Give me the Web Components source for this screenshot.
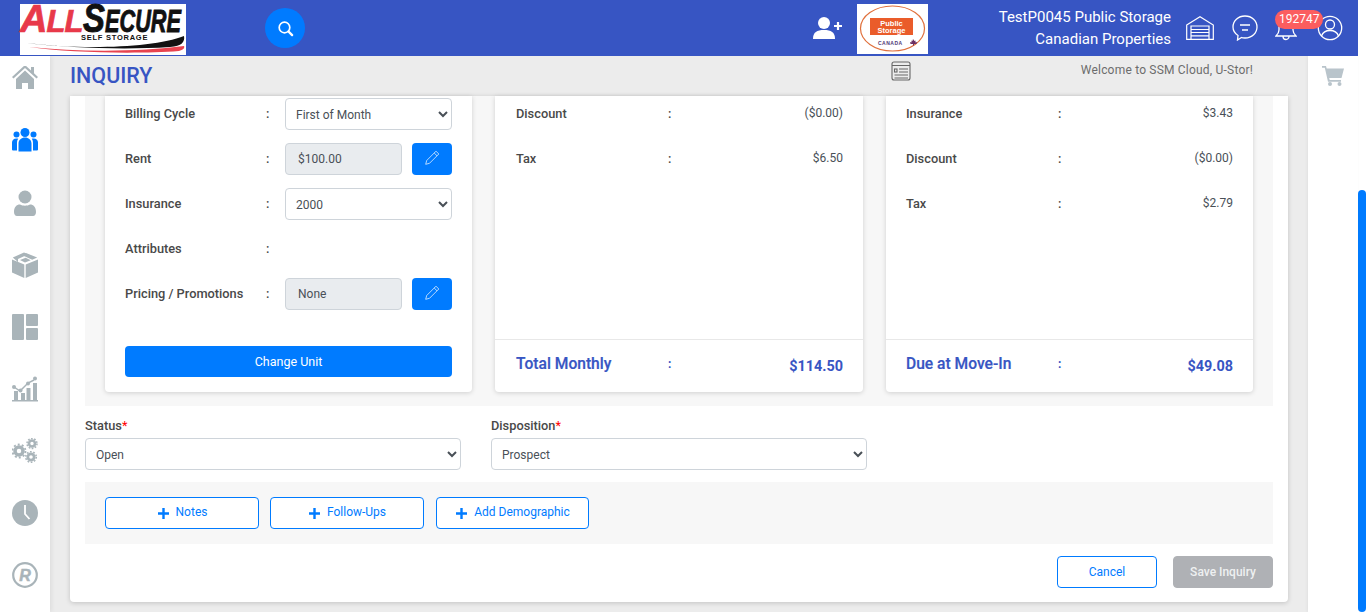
<!DOCTYPE html>
<html lang="en">
<head>
<meta charset="utf-8">
<title>Inquiry</title>
<style>
  html, body { margin: 0; height: 100%; overflow: hidden; background: #ececec; }
  body { font-family: Roboto, "Liberation Sans", sans-serif; font-size: 12px; color: #495057; }
</style>
</head>
<body>

<app-shell>
  <top-bar slot="top"></top-bar>
  <side-nav slot="left"></side-nav>
  <inquiry-page slot="main"></inquiry-page>
  <cart-rail slot="right"></cart-rail>
</app-shell>

<script>
const ICONS = {
  search: '<circle cx="7.5" cy="7.5" r="5.3" fill="none" stroke="#fff" stroke-width="1.7"/><path d="M11.5 11.5l3.6 3.6" stroke="#fff" stroke-width="2.4" stroke-linecap="round"/>',
  pencil: '<path d="M12 1.2l2.800 2.800-9.300 9.300-3.800 1 1-3.800zM10.200 3l2.800 2.800" fill="none" stroke="#fff" stroke-width=".7"/>',
  plus: '<path d="M6.5 1v11M1 6.5h11" stroke="#007bff" stroke-width="2.4"/>'
};

class AppShell extends HTMLElement {
  constructor() {
    super();
    this.attachShadow({ mode: "open" }).innerHTML = `
    <style>
      :host { display: grid; grid-template-columns: 50px 1fr 50px 8px; grid-template-rows: 56px 556px; width: 1366px; height: 612px; overflow: hidden; }
      .top { grid-column: 1 / 4; }
      .bar { grid-column: 4; grid-row: 1 / 3; background: #fff; display: flex; flex-direction: column; }
      .thumb { margin-top: 190px; flex: 1; background: #007bff; border-radius: 4px; }
      ::slotted(side-nav), ::slotted(inquiry-page), ::slotted(cart-rail) { min-height: 0; }
    </style>
    <div class="top"><slot name="top"></slot></div>
    <slot name="left"></slot>
    <slot name="main"></slot>
    <slot name="right"></slot>
    <div class="bar"><div class="thumb"></div></div>`;
  }
}

class TopBar extends HTMLElement {
  constructor() {
    super();
    this.attachShadow({ mode: "open" }).innerHTML = `
    <style>
      :host { display: flex; align-items: center; height: 56px; background: #3755c3; color: #fff; position: relative; z-index: 2; }
      .logo { margin-left: 20px; width: 166px; height: 51px; margin-top: 2px; background: #fff; flex: none; }
      .logo svg, .ps svg { display: block; overflow: visible; }
      .search { width: 40px; height: 40px; border-radius: 50%; background: #007bff; margin-left: 79px; display: flex; align-items: center; justify-content: center; flex: none; }
      .grow { flex: 1; }
      .ps { width: 71px; height: 50px; background: #fff; margin: 2px 0 0 13px; flex: none; }
      .names { width: 243px; text-align: right; font-size: 15px; line-height: 22.5px; flex: none; }
      .icons { display: flex; align-items: center; margin-left: 15px; position: relative; width: 172px; flex: none; }
      .icons svg { display: block; flex: none; }
      .badge { position: absolute; left: 89px; top: -5px; background: #fb5d5f; color: #fff; border-radius: 10px; font-size: 12px; line-height: 19px; height: 19px; padding: 0 4px; }
    </style>
    <div class="logo">
      <svg width="166" height="51" viewBox="0 0 166 51">
        <text transform="translate(0 28)" font-family="Liberation Sans" font-weight="700" font-style="italic" font-size="38" fill="#e8394a" stroke="#e8394a" stroke-width=".7" letter-spacing="-1">A<tspan font-size="31">LL</tspan></text>
        <text transform="translate(63 28) scale(.82 1)" font-family="Liberation Sans" font-weight="700" font-style="italic" font-size="40" fill="#111" stroke="#111" stroke-width=".9">S</text>
        <text transform="translate(85 28) scale(.7 1)" font-family="Liberation Sans" font-weight="700" font-style="italic" font-size="31" fill="#111" stroke="#111" stroke-width=".9">ECURE</text>
        <text x="61" y="36" font-family="Liberation Sans" font-weight="700" font-size="7.500" letter-spacing=".75" fill="#111">SELF STORAGE</text>
        <path d="M7 39C60 46 135 44 164 32c1 6-2 10-14 11C105 46 50 44 7 39z" fill="#111"/>
        <path d="M9 43c50 5 110 5 155-1 1 2-1 4-5 5-40 3-110 2-150-4z" fill="#e8434f"/>
      </svg>
    </div>
    <div class="search"><svg width="17" height="17" viewBox="0 0 17 17">${ICONS.search}</svg></div>
    <div class="grow"></div>
    <svg width="32" height="24" viewBox="0 0 32 24" style="flex:none">
      <circle cx="12" cy="7" r="6" fill="#fff"/><path d="M1 23c0-7 4-9 11-9s11 2 11 9z" fill="#fff"/><path d="M26 6v8M22 10h8" stroke="#fff" stroke-width="2.200"/>
    </svg>
    <div class="ps">
      <svg width="71" height="50" viewBox="0 0 71 50">
        <ellipse cx="35.500" cy="24.500" ry="22.500" rx="32" fill="none" stroke="#e0703c" stroke-width="1.200"/>
        <rect x="13" y="14" width="43" height="17" fill="#ea5c2a"/>
        <text x="34.500" y="21.500" text-anchor="middle" font-family="Liberation Sans" font-weight="700" font-size="7.500" fill="#fff">Public</text>
        <text x="34.500" y="29" text-anchor="middle" font-family="Liberation Sans" font-weight="700" font-size="7.500" fill="#fff">Storage</text>
        <text x="21" y="41" font-family="Liberation Sans" font-weight="700" font-size="5" letter-spacing=".5" fill="#4f3a78">CANADA</text>
        <path d="M56 35l1.500 2 1-.5 0 2 1.500-.5-.5 2h-2.500v1.500h-1v-1.500h-2.500l-.5-2 1.500.5 0-2 1 .5z" fill="#6b2f63"/>
      </svg>
    </div>
    <div class="names"><div>TestP0045 Public Storage</div><div>Canadian Properties</div></div>
    <div class="icons">
      <svg width="28" height="24" viewBox="0 0 28 24" fill="none" stroke="#fff" stroke-width="1.200">
        <path d="M.7 9L14 .8 27.300 9v14.300H.7zM5 10h18v13.300H5zM5 13.500h18M5 16.500h18M5 19.800h18"/>
      </svg>
      <svg style="margin-left:18px" width="26" height="26" viewBox="0 0 26 26" fill="none" stroke="#fff" stroke-width="1.300">
        <path d="M13 1c7 0 12 5 12 11s-5 11-12 11c-1.500 0-2.500 0-3.500-.5L5.500 25l.5-4.500C3 18.500 1 15.500 1 12 1 6 6 1 13 1z"/><path d="M8 10h10M10 15h6"/>
      </svg>
      <svg style="margin-left:17px" width="22" height="26" viewBox="0 0 22 26" fill="none" stroke="#fff" stroke-width="1.300">
        <path d="M4 6v9c0 3-1 4-3 6h20c-2-2-3-3-3-6V6M8 21.500a3 3 0 0 0 6 0"/>
      </svg>
      <svg style="margin-left:20px" width="26" height="26" viewBox="0 0 26 26" fill="none" stroke="#fff" stroke-width="1.300">
        <circle cx="13" cy="13" r="11.700"/><circle cx="13" cy="9.500" r="4.500"/><path d="M4.500 21c1.500-4 4-5.500 8.500-5.500s7 1.500 8.500 5.500"/>
      </svg>
      <span class="badge">192747</span>
    </div>`;
  }
}

class SideNav extends HTMLElement {
  constructor() {
    super();
    const g = "#a9b4b9";
    this.attachShadow({ mode: "open" }).innerHTML = `
    <style>
      :host { display: flex; flex-direction: column; align-items: center; background: #fff; padding-top: 10px; box-shadow: 2px 0 4px rgba(0,0,0,.06); position: relative; z-index: 1; }
      svg { display: block; width: 26px; height: 26px; margin-bottom: 36px; flex: none; }
    </style>
    <svg viewBox="0 2 26 26" fill="${g}"><path d="M13 1L0 13l1.500 1.500L13 4l11.500 10.500L26 13l-4-3.700V3h-3v3.500zM4 15v10h6v-6h6v6h6V15L13 6.500z"/></svg>
    <svg viewBox="0 2.500 26 26" fill="#007bff"><circle cx="13" cy="7" r="4.500"/><circle cx="4.500" cy="9" r="3"/><circle cx="21.500" cy="9" r="3"/><path d="M6.500 26v-8c0-3.500 3-6 6.500-6s6.500 2.500 6.500 6v8zM0 24v-7c0-2 1.500-4 4.500-4 .7 0 1.300.1 1.700.3C5.300 14.500 5 16 5 18v7H1a1 1 0 0 1-1-1zM26 24v-7c0-2-1.500-4-4.500-4-.7 0-1.300.1-1.700.3.900 1.200 1.200 2.700 1.200 4.700v7h4a1 1 0 0 0 1-1z"/></svg>
    <svg viewBox="0 0 26 26" fill="${g}"><circle cx="13" cy="7" r="6.500"/><path d="M2 22c0-5 2.500-7.500 6-7.500 1.500.8 3 1.200 5 1.200s3.500-.4 5-1.200c3.500 0 6 2.500 6 7.500 0 2-1 4-3 4H5c-2 0-3-2-3-4z"/></svg>
    <svg viewBox="0 0 26 26" fill="${g}"><path d="M0 7.500l12.300 5V26L0 20.500zM26 7.500l-12.300 5V26L26 20.500zM.8 5.500L12 .5l4.300 1.800L6 7v3zM14 1l11.200 4.500-5 2.300L9.800 3zM8 8l5 2.400 5.700-2.200-5-2.400z"/></svg>
    <svg viewBox="0 0 26 26" fill="${g}"><rect width="12" height="26" rx="1"/><rect x="14" width="12" height="12" rx="1"/><rect x="14" y="14" width="12" height="12" rx="1"/></svg>
    <svg viewBox="0 0 26 26" fill="${g}"><rect x="2" y="15" width="4" height="9"/><rect x="9" y="17" width="4" height="7"/><rect x="14.500" y="12" width="4" height="12"/><rect x="21" y="7" width="4" height="17"/><rect y="24" width="26" height="1.500"/><path d="M2 11l6 4 8-8 6-3" fill="none" stroke="${g}" stroke-width="1.500"/><circle cx="2" cy="11" r="2"/><circle cx="8.500" cy="14.500" r="2"/><circle cx="16" cy="7.500" r="2"/><circle cx="23" cy="2.500" r="2"/></svg>
    <svg viewBox="0 0 26 26" fill="none" stroke="${g}">
      <circle cx="7" cy="13" r="4" stroke-width="3.500"/><circle cx="7" cy="13" r="6.500" stroke-width="1.800" stroke-dasharray="2 2.080"/>
      <circle cx="20" cy="5.500" r="3" stroke-width="2.600"/><circle cx="20" cy="5.500" r="5" stroke-width="1.500" stroke-dasharray="1.700 1.440"/>
      <circle cx="19" cy="19" r="3.200" stroke-width="2.800"/><circle cx="19" cy="19" r="5.300" stroke-width="1.500" stroke-dasharray="1.700 1.630"/>
    </svg>
    <svg viewBox="0 0 26 26"><circle cx="13" cy="13" r="13" fill="${g}"/><path d="M13 5v9l4.500 5" fill="none" stroke="#fff" stroke-width="1.800"/></svg>
    <svg viewBox="0 0 26 26"><circle cx="13" cy="13" r="11.800" fill="none" stroke="${g}" stroke-width="2.200"/><text x="13" y="18.500" text-anchor="middle" font-family="Liberation Sans" font-weight="700" font-style="italic" font-size="16" fill="${g}" stroke="${g}" stroke-width=".5">R</text></svg>`;
  }
}

class CartRail extends HTMLElement {
  constructor() {
    super();
    this.attachShadow({ mode: "open" }).innerHTML = `
    <style>
      :host { display: block; background: #fff; padding: 9px 0 0 14px; box-shadow: -1px 0 3px rgba(0,0,0,.05); position: relative; z-index: 1; }
      svg { display: block; }
    </style>
    <svg width="22" height="21" viewBox="0 0 22 21" fill="#b9c4cb"><path d="M0 1h4l.7 2.500H22l-2.500 9.500H7.200l.5 2H19v1.800H6L2.800 2.800H0z"/><circle cx="8" cy="19" r="2"/><circle cx="17.500" cy="19" r="2"/></svg>`;
  }
}

class InquiryPage extends HTMLElement {
  constructor() {
    super();
    this.attachShadow({ mode: "open" }).innerHTML = `
    <style>
      :host { display: block; background: #ececec; overflow: hidden; }
      .head { height: 40px; display: flex; position: relative; padding-left: 20px; }
      h1 { margin: 8px 0 0; font-size: 21.5px; line-height: 24px; font-weight: 500; color: #3755c3; }
      .news { position: absolute; left: 841px; top: 5px; display: block; }
      .welcome { position: absolute; right: 55px; top: 6px; font-size: 12px; line-height: 16px; letter-spacing: .2px; color: #6c6c6c; }
      .sheet { margin: 0 20px; height: 506px; background: #fff; border-radius: 0 0 4px 4px; box-shadow: 0 1px 5px rgba(0,0,0,.18); padding: 0 15px; box-sizing: border-box; }
      .panel { background: #f7f7f7; height: 310px; padding: 0 20px 14px; box-sizing: border-box; display: grid; grid-template-columns: 367px 368px 367px; column-gap: 23px; }
      .statuses { display: flex; gap: 30px; margin-top: 11px; }
      .statuses form-field { width: 376px; }
      .actions { background: #f7f7f7; margin-top: 12px; height: 62px; padding: 15px 20px; box-sizing: border-box; display: flex; gap: 11px; }
      .actions line-button:last-child { margin-left: 1px; }
      .foot { display: flex; justify-content: flex-end; gap: 16px; margin-top: 12px; }
      .third { --pad: 20px; }
    </style>
    <div class="head">
      <h1>INQUIRY</h1>
      <svg class="news" width="20" height="20" viewBox="0 0 20 20" fill="none" stroke="#666" stroke-width="1.100"><rect x="1" y="1" width="18" height="18" rx="2"/><path d="M1 4.500h18M8 8h9M8 11h9M3.500 14h13.500M3.500 17h13.500"/><rect x="3.500" y="8" width="2.500" height="3"/></svg>
      <span class="welcome">Welcome to SSM Cloud, U-Stor!</span>
    </div>
    <div class="sheet">
      <div class="panel">
        <unit-card>
          <form-row label="Billing Cycle"><pick-box value="First of Month"></pick-box></form-row>
          <form-row label="Rent"><edit-box value="$100.00"></edit-box></form-row>
          <form-row label="Insurance"><pick-box value="2000"></pick-box></form-row>
          <form-row label="Attributes"></form-row>
          <form-row label="Pricing / Promotions"><edit-box value="None"></edit-box></form-row>
        </unit-card>
        <total-card total-label="Total Monthly" total="$114.50">
          <charge-row label="Discount" value="($0.00)"></charge-row>
          <charge-row label="Tax" value="$6.50"></charge-row>
        </total-card>
        <total-card class="third" total-label="Due at Move-In" total="$49.08">
          <charge-row label="Insurance" value="$3.43"></charge-row>
          <charge-row label="Discount" value="($0.00)"></charge-row>
          <charge-row label="Tax" value="$2.79"></charge-row>
        </total-card>
      </div>
      <div class="statuses">
        <form-field label="Status"><pick-box value="Open"></pick-box></form-field>
        <form-field label="Disposition"><pick-box value="Prospect"></pick-box></form-field>
      </div>
      <div class="actions">
        <line-button width="154" plus>Notes</line-button>
        <line-button width="154" plus>Follow-Ups</line-button>
        <line-button width="153" plus>Add Demographic</line-button>
      </div>
      <div class="foot">
        <line-button width="100">Cancel</line-button>
        <line-button width="100" disabled>Save Inquiry</line-button>
      </div>
    </div>`;
  }
}

class UnitCard extends HTMLElement {
  constructor() {
    super();
    this.attachShadow({ mode: "open" }).innerHTML = `
    <style>
      :host { display: block; background: #fff; border-radius: 0 0 4px 4px; box-shadow: 0 1px 5px rgba(0,0,0,.16); padding: 2px 20px 0; height: 296px; box-sizing: border-box; }
      .rows { display: flex; flex-direction: column; gap: 13px; height: 248px; }
      button { display: block; width: 100%; height: 31px; border: 0; border-radius: 4px; background: #007bff; color: #fff; font: 400 12.500px Roboto, sans-serif; padding: 0; }
    </style>
    <div class="rows"><slot></slot></div>
    <button type="button">Change Unit</button>`;
  }
}

class FormRow extends HTMLElement {
  constructor() {
    super();
    this.attachShadow({ mode: "open" }).innerHTML = `
    <style>
      :host { display: grid; grid-template-columns: 141px 19px 167px; height: 32px; align-items: center; font-weight: 500; color: #494949; font-size: 12.800px; }
      span { position: relative; top: -1px; }
    </style>
    <span>${this.getAttribute("label")}</span><span>:</span><slot></slot>`;
  }
}

class PickBox extends HTMLElement {
  constructor() {
    super();
    this.attachShadow({ mode: "open" }).innerHTML = `
    <style>
      :host { display: block; height: 32px; }
      select { display: block; width: 100%; height: 32px; border: 1px solid #ced4da; border-radius: 4px; background: #fff; color: #495057; font: 400 12px Roboto, sans-serif; padding: 2px 0 0 6px; }
    </style>
    <select><option>${this.getAttribute("value")}</option></select>`;
  }
}

class EditBox extends HTMLElement {
  constructor() {
    super();
    this.attachShadow({ mode: "open" }).innerHTML = `
    <style>
      :host { display: flex; justify-content: space-between; height: 32px; font-size: 12px; }
      .val { width: 117px; box-sizing: border-box; background: #e9ecef; border: 1px solid #ced4da; border-radius: 4px; font-weight: 400; color: #495057; padding-left: 12px; line-height: 30px; }
      .btn { width: 40px; background: #007bff; border-radius: 4px; display: flex; align-items: center; justify-content: center; }
      svg { position: relative; top: -1px; }
    </style>
    <div class="val">${this.getAttribute("value")}</div>
    <div class="btn"><svg width="16" height="16" viewBox="0 0 16 16">${ICONS.pencil}</svg></div>`;
  }
}

class TotalCard extends HTMLElement {
  constructor() {
    super();
    this.attachShadow({ mode: "open" }).innerHTML = `
    <style>
      :host { display: flex; flex-direction: column; background: #fff; border-radius: 0 0 4px 4px; box-shadow: 0 1px 5px rgba(0,0,0,.16); height: 296px; }
      .rows { flex: 1; padding: 2px 20px 0 var(--pad, 21px); display: flex; flex-direction: column; gap: 13px; }
      .total { height: 53px; flex: none; border-top: 1px solid #e8e8e8; display: grid; grid-template-columns: 152px 1fr auto; align-items: center; padding: 0 20px 0 var(--pad, 21px); color: #3755c3; font-weight: 700; box-sizing: border-box; }
      .l { font-size: 15.600px; font-weight: 500; position: relative; top: -2px; -webkit-text-stroke: .2px #3755c3; }
      .c { font-size: 12px; position: relative; top: -2px; }
      .v { font-size: 14.400px; }
    </style>
    <div class="rows"><slot></slot></div>
    <div class="total"><span class="l">${this.getAttribute("total-label")}</span><span class="c">:</span><span class="v">${this.getAttribute("total")}</span></div>`;
  }
}

class ChargeRow extends HTMLElement {
  constructor() {
    super();
    this.attachShadow({ mode: "open" }).innerHTML = `
    <style>
      :host { display: grid; grid-template-columns: 152px 1fr auto; height: 32px; align-items: center; color: #494949; font-size: 12.800px; font-weight: 500; }
      span { position: relative; top: -1px; }
      .v { font-weight: 400; font-size: 12px; color: #495057; }
    </style>
    <span>${this.getAttribute("label")}</span><span>:</span><span class="v">${this.getAttribute("value")}</span>`;
  }
}

class FormField extends HTMLElement {
  constructor() {
    super();
    this.attachShadow({ mode: "open" }).innerHTML = `
    <style>
      :host { display: block; }
      label { display: block; height: 21px; line-height: 18px; font-weight: 500; font-size: 12.800px; color: #494949; }
      i { color: #f00; font-style: normal; font-weight: 400; }
    </style>
    <label>${this.getAttribute("label")}<i>*</i></label><slot></slot>`;
  }
}

class LineButton extends HTMLElement {
  constructor() {
    super();
    const plus = this.hasAttribute("plus");
    this.attachShadow({ mode: "open" }).innerHTML = `
    <style>
      :host { display: flex; align-items: center; justify-content: center; gap: 6px; height: 32px; box-sizing: border-box; width: ${this.getAttribute("width")}px; border: 1px solid #007bff; border-radius: 4px; background: #fff; color: #007bff; font-size: 12px; flex: none; }
      :host([disabled]) { background: #afb1b5; border-color: #afb1b5; color: #eef0f1; font-weight: 500; }
      svg { display: block; }
      span { position: relative; top: ${plus ? -1 : 0}px; }
    </style>
    ${plus ? `<svg width="13" height="13" viewBox="0 0 13 13">${ICONS.plus}</svg>` : ""}
    <span><slot></slot></span>`;
  }
}

customElements.define("line-button", LineButton);
customElements.define("form-field", FormField);
customElements.define("charge-row", ChargeRow);
customElements.define("total-card", TotalCard);
customElements.define("edit-box", EditBox);
customElements.define("pick-box", PickBox);
customElements.define("form-row", FormRow);
customElements.define("unit-card", UnitCard);
customElements.define("inquiry-page", InquiryPage);
customElements.define("cart-rail", CartRail);
customElements.define("side-nav", SideNav);
customElements.define("top-bar", TopBar);
customElements.define("app-shell", AppShell);
</script>
</body>
</html>
